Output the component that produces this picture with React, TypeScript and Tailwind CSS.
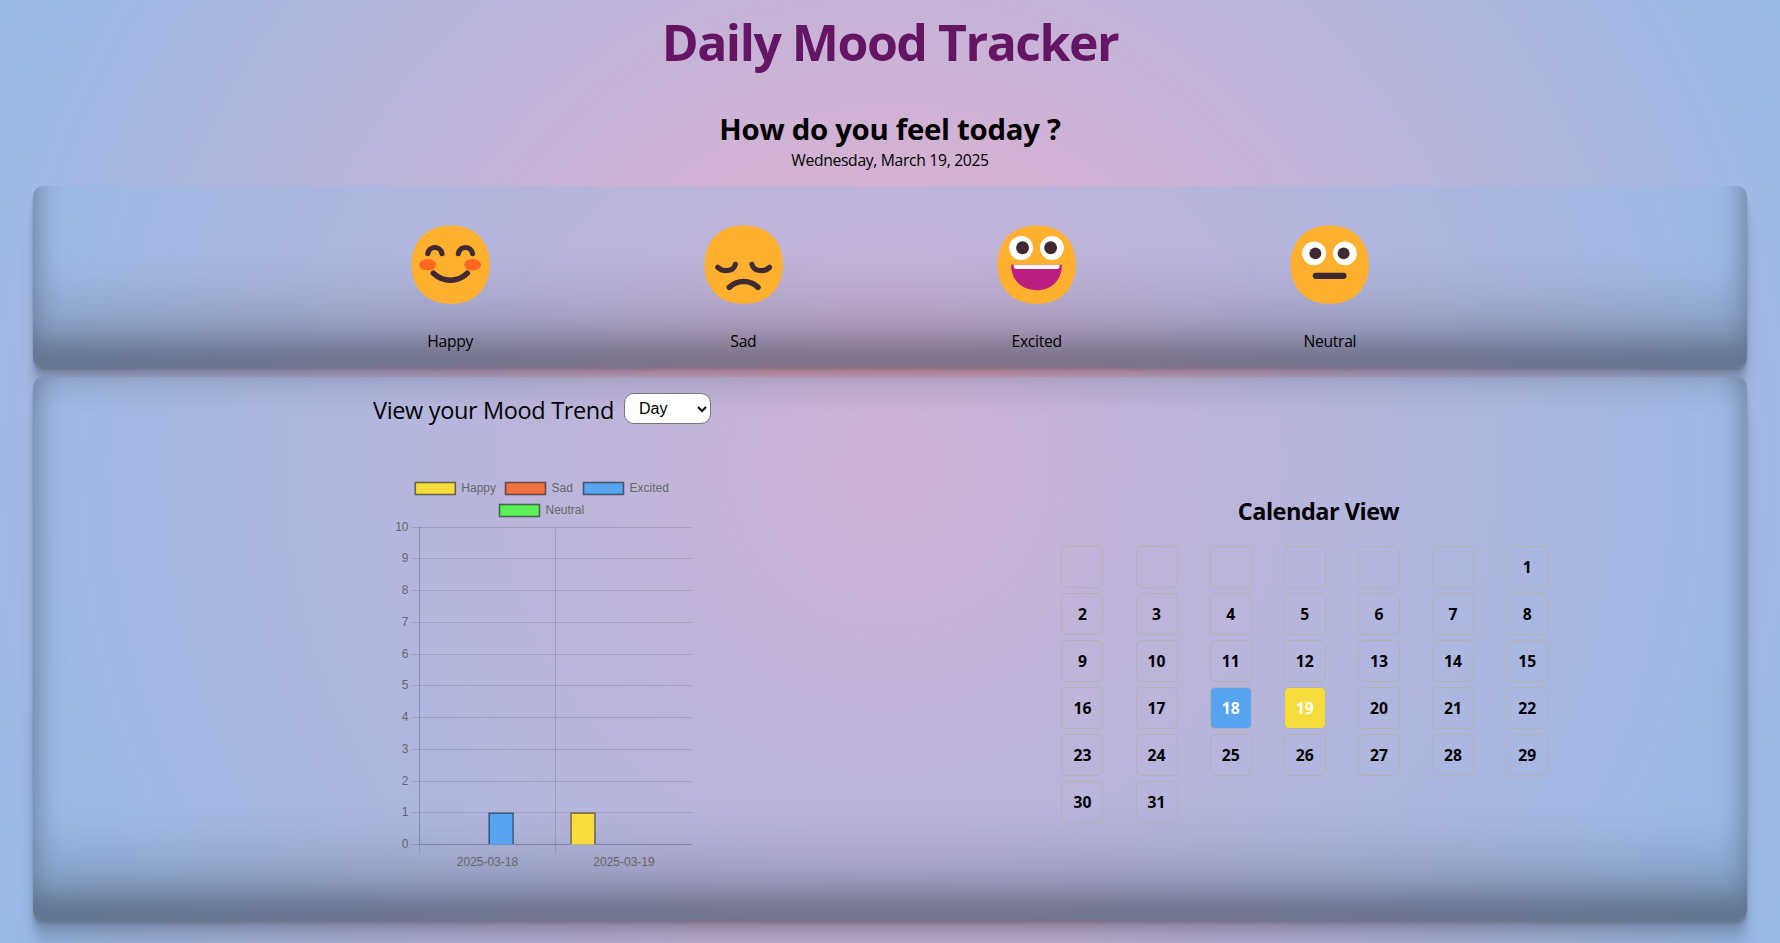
import type { ReactNode } from "react";

const moods: { name: string; face: ReactNode }[] = [
  {
    name: "Happy",
    face: (
      <>
        <ellipse cx="48.5" cy="118" rx="25.5" ry="17" fill="#FF6723" />
        <ellipse cx="184" cy="118" rx="25.5" ry="17" fill="#FF6723" />
        <g fill="none" stroke="#402A32" strokeLinecap="round">
          <path strokeWidth="15.5" d="M49 85C54 60 87 60 92 85M141 85C146 60 179 60 184 85" />
          <path strokeWidth="17" d="M66 144C96 172 138 172 168 144" />
        </g>
      </>
    ),
  },
  {
    name: "Sad",
    face: (
      <g fill="none" stroke="#402A32" strokeLinecap="round">
        <path strokeWidth="15.5" d="M40 126C55 141 87 140 93 117M196 126C181 141 149 140 143 117" />
        <path strokeWidth="17" d="M75 186C98 163 138 163 161 186" />
      </g>
    ),
  },
  {
    name: "Excited",
    face: (
      <>
        <circle cx="71" cy="68" r="36" fill="#fff" />
        <circle cx="164" cy="68" r="36" fill="#fff" />
        <circle cx="75.5" cy="67" r="19.5" fill="#402A32" />
        <circle cx="160" cy="67" r="19.5" fill="#402A32" />
        <path d="M41 118H194C194 166 161 195 118 195S41 166 41 118Z" fill="#BB1D80" />
        <path d="M49 118H187V123Q187 131 179 131H57Q49 131 49 123Z" fill="#fff" />
      </>
    ),
  },
  {
    name: "Neutral",
    face: (
      <>
        <circle cx="71" cy="84" r="36" fill="#fff" />
        <circle cx="164" cy="84" r="36" fill="#fff" />
        <circle cx="75" cy="84" r="18" fill="#402A32" />
        <circle cx="160" cy="84" r="18" fill="#402A32" />
        <rect x="67" y="142" width="102" height="19" rx="9.5" fill="#402A32" />
      </>
    ),
  },
];

const panel =
  "rounded-[10px] bg-[rgba(148,187,233,0.35)] [box-shadow:rgba(0,0,0,0.17)_0px_-23px_25px_0px_inset,rgba(0,0,0,0.15)_0px_-36px_30px_0px_inset,rgba(0,0,0,0.1)_0px_-79px_40px_0px_inset,rgba(0,0,0,0.06)_0px_2px_1px,rgba(0,0,0,0.09)_0px_4px_2px,rgba(0,0,0,0.09)_0px_8px_4px,rgba(0,0,0,0.09)_0px_16px_8px,rgba(0,0,0,0.09)_0px_32px_16px]";

const legend = [
  { name: "Happy", color: "#F7DC3D", x: 42.3, y: 12.5 },
  { name: "Sad", color: "#F07140", x: 132.5, y: 12.5 },
  { name: "Excited", color: "#58A4F0", x: 210.5, y: 12.5 },
  { name: "Neutral", color: "#5AF05A", x: 126.5, y: 34.5 },
];

const gridY = [57.5, 88.5, 120.5, 152.5, 184.5, 215.5, 247.5, 279.5, 311.5, 342.5];

function MoodChart() {
  return (
    <svg
      width="340"
      height="410"
      viewBox="0 0 340 410"
      className="block font-['Liberation_Sans',sans-serif] text-[12px]"
    >
      {legend.map((l) => (
        <g key={l.name}>
          <rect x={l.x} y={l.y} width="40" height="12" fill={l.color} />
          <rect x={l.x} y={l.y} width="40" height="12" fill="none" stroke="#000" strokeOpacity="0.5" strokeWidth="1.6" />
          <text x={l.x + 46} y={l.y + 9.5} fill="#666">
            {l.name}
          </text>
        </g>
      ))}
      <g stroke="#000" strokeOpacity="0.12">
        {gridY.map((y) => (
          <path key={y} d={`M38.5 ${y}H319`} />
        ))}
        <path d="M38.5 374.5H46M182.5 57V383M46.5 375V383" />
      </g>
      <path d="M46.5 57V374.5H319" fill="none" stroke="#000" strokeOpacity="0.24" />
      {[...gridY, 374.5].map((y, i) => (
        <text key={y} x="35.5" y={y + 3.2} textAnchor="end" fill="#666">
          {10 - i}
        </text>
      ))}
      <rect x="115.7" y="343" width="24.3" height="31.5" fill="#58A4F0" />
      <path d="M116.2 374V343.3H140.2V374" fill="none" stroke="#000" strokeOpacity="0.45" strokeWidth="1.6" />
      <rect x="197.7" y="343" width="24" height="31.5" fill="#F7DC3D" />
      <path d="M198.1 374V343.3H221.9V374" fill="none" stroke="#000" strokeOpacity="0.45" strokeWidth="1.6" />
      <text x="114.5" y="396" textAnchor="middle" fill="#666">
        2025-03-18
      </text>
      <text x="251" y="396" textAnchor="middle" fill="#666">
        2025-03-19
      </text>
    </svg>
  );
}

function dayStyle(day: number) {
  if (day === 18) return "bg-[#58A4F0] text-white";
  if (day === 19) return "bg-[#F7DC3D] text-white";
  return "text-black";
}

function Calendar() {
  const cells = [...Array(6).fill(0), ...Array.from({ length: 31 }, (_, i) => i + 1)] as number[];
  return (
    <div className="mt-[109px] ml-[348px] w-[515px]">
      <h2 className="h-[60px] text-center text-[23.5px] leading-[51px] font-bold tracking-[-0.5px]">Calendar View</h2>
      <div className="ml-[0.4px] grid w-[513.9px] grid-cols-7 gap-[5px]">
        {cells.map((d, i) => (
          <div
            key={i}
            className={`flex h-[42px] w-[42px] items-center justify-center rounded-[5px] border border-[#b3b3b3] pt-0.5 text-[15.7px] leading-none font-bold ${dayStyle(d)}`}
          >
            {d > 0 && d}
          </div>
        ))}
      </div>
    </div>
  );
}

export default function App() {
  return (
    <div className="h-[943px] overflow-hidden bg-[radial-gradient(circle_at_50%_466px,rgba(238,174,202,1)_0%,rgba(148,187,233,1)_104%)] px-[33px] font-['Open_Sans','Noto_Sans',sans-serif] text-black">
      <header className="h-[186px] text-center">
        <h1 className="h-[108px] text-[50px] leading-[85px] font-bold tracking-[-1.5px] text-[#641665]">
          Daily Mood Tracker
        </h1>
        <h2 className="h-[40px] text-[29.4px] leading-[42px] font-bold tracking-[-0.3px]">How do you feel today ?</h2>
        <p className="text-[15.7px] leading-[24px] tracking-[-0.32px]">Wednesday, March 19, 2025</p>
      </header>

      <section className={`h-[181px] pt-[39px] ${panel}`}>
        <div className="mx-auto grid w-[1173px] grid-cols-4">
          {moods.map((m) => (
            <div key={m.name} className="flex flex-col items-center">
              <svg viewBox="-1.5 -1.5 238 238" className="h-[79px] w-[79px]">
                <path
                  d="M118 236C196.7 236 236 183 236 118S196.7 0 118 0 0 53 0 118 39.3 236 118 236Z"
                  fill="#FFB02E"
                />
                {m.face}
              </svg>
              <span className="mt-[25px] text-[15.7px] leading-[24px] tracking-[-0.3px]">{m.name}</span>
            </div>
          ))}
        </div>
      </section>

      <section className={`mt-2.5 flex h-[543px] items-start pl-[340px] ${panel}`}>
        <div className="w-[340px]">
          <div className="flex h-[93px] items-start">
            <span className="mt-[13px] w-[251px] text-[23.5px] leading-[40px] tracking-[-0.35px] whitespace-nowrap">
              View your Mood Trend
            </span>
            <button className="mt-4 flex h-[31px] w-[87px] items-center justify-between rounded-[10px] border border-[#767676] bg-white pr-[3px] pl-[14px] font-['Liberation_Sans',sans-serif] text-base leading-none">
              Day
              <svg width="10" height="8" viewBox="0 0 10 8" fill="none" stroke="#000" strokeWidth="2">
                <path d="M1 2L5 6L9 2" />
              </svg>
            </button>
          </div>
          <MoodChart />
        </div>
        <Calendar />
      </section>
    </div>
  );
}
